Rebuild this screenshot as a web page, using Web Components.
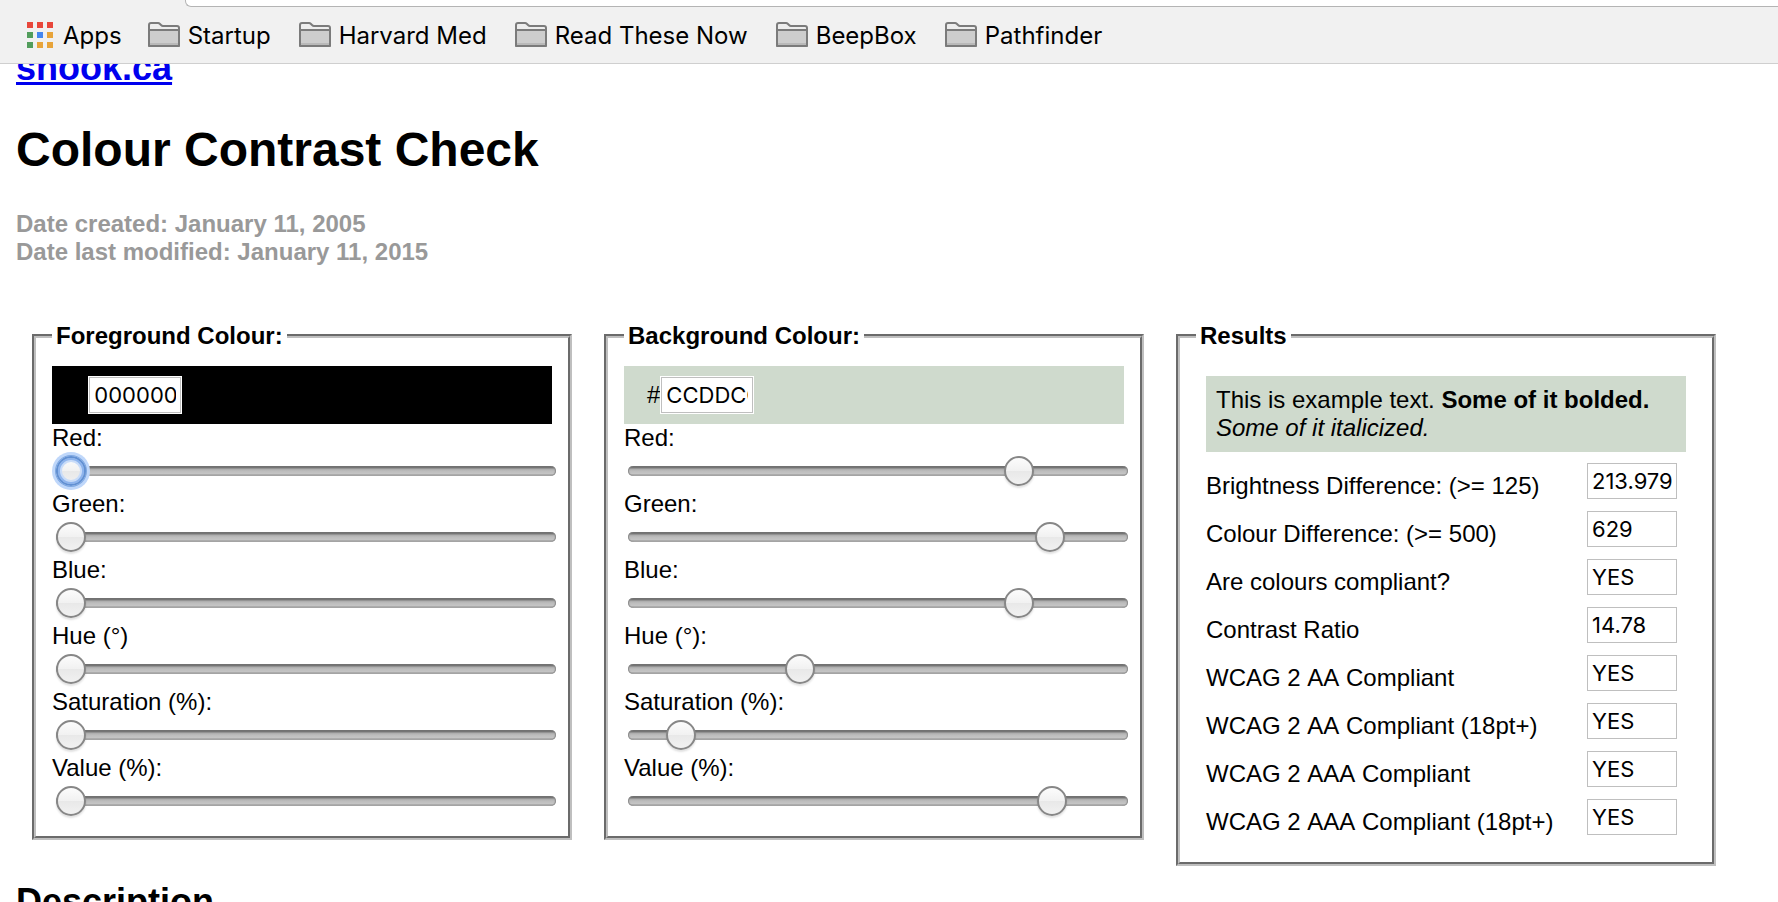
<!DOCTYPE html>
<html lang="en">
<head>
<meta charset="utf-8">
<title>Colour Contrast Check - snook.ca</title>
<style>
  html, body { margin: 0; height: 100%; }
  body {
    display: flex; flex-direction: column; overflow: hidden; background: #fff; color: #000;
    font: 24px/28px "Liberation Sans", Arial, sans-serif;
  }
</style>
</head>
<body>
<bookmarks-bar>
  <bookmark-folder>Startup</bookmark-folder>
  <bookmark-folder>Harvard Med</bookmark-folder>
  <bookmark-folder>Read These Now</bookmark-folder>
  <bookmark-folder>BeepBox</bookmark-folder>
  <bookmark-folder>Pathfinder</bookmark-folder>
</bookmarks-bar>
<contrast-page>
  <colour-panel legend="Foreground Colour:" value="000000" colour="#000000">
    <colour-slider value="0" max="255" active>Red:</colour-slider>
    <colour-slider value="0" max="255">Green:</colour-slider>
    <colour-slider value="0" max="255">Blue:</colour-slider>
    <colour-slider value="0" max="360">Hue (°)</colour-slider>
    <colour-slider value="0" max="100">Saturation (%):</colour-slider>
    <colour-slider value="0" max="100">Value (%):</colour-slider>
  </colour-panel>
  <colour-panel legend="Background Colour:" value="CCDDCC" colour="#cfdacd">
    <colour-slider value="204" max="255">Red:</colour-slider>
    <colour-slider value="221" max="255">Green:</colour-slider>
    <colour-slider value="204" max="255">Blue:</colour-slider>
    <colour-slider value="120" max="360">Hue (°):</colour-slider>
    <colour-slider value="8" max="100">Saturation (%):</colour-slider>
    <colour-slider value="87" max="100">Value (%):</colour-slider>
  </colour-panel>
  <results-panel>
    <result-row value="213.979">Brightness Difference: (&gt;= 125)</result-row>
    <result-row value="629">Colour Difference: (&gt;= 500)</result-row>
    <result-row value="YES">Are colours compliant?</result-row>
    <result-row value="14.78">Contrast Ratio</result-row>
    <result-row value="YES">WCAG 2 AA Compliant</result-row>
    <result-row value="YES">WCAG 2 AA Compliant (18pt+)</result-row>
    <result-row value="YES">WCAG 2 AAA Compliant</result-row>
    <result-row value="YES">WCAG 2 AAA Compliant (18pt+)</result-row>
  </results-panel>
</contrast-page>

<script>
const define = (name, render) => customElements.define(name, class extends HTMLElement {
  connectedCallback() {
    if (this.shadowRoot) return;
    this.attachShadow({ mode: 'open' }).innerHTML = render(this);
  }
});

const fieldsetStyle = `
  fieldset { margin: 0; min-width: 0; padding: 16px; border: 4px groove #bfbfbf; }
  legend { padding: 0 4px; font-weight: bold; }
`;

define('bookmarks-bar', () => `
  <style>
    :host { display: block; flex: none; background: #f1f1f1; border-bottom: 1px solid #cfcfcf; }
    .address { height: 6px; margin-left: 185px; background: #fff; border: solid #b4b4b4; border-width: 0 0 1px 1px; border-bottom-left-radius: 6px; }
    nav { display: flex; align-items: center; gap: 26px; height: 56px; padding: 0 27px; font: 24px/28px Inter, sans-serif; }
    a { display: flex; align-items: center; gap: 10px; color: inherit; text-decoration: none; }
    span { padding-top: 2px; }
    svg { display: block; }
  </style>
  <div class="address"></div>
  <nav aria-label="Bookmarks">
    <a href="#apps">
      <svg width="26" height="26" viewBox="0 0 26 26" aria-hidden="true">
        <path fill="#e8473b" d="M0 0h6v6H0zM10 0h6v6h-6zM20 0h6v6h-6z"/>
        <path fill="#529d5c" d="M0 10h6v6H0zM0 20h6v6H0z"/>
        <path fill="#4486f0" d="M10 10h6v6h-6z"/>
        <path fill="#e8a43a" d="M20 10h6v6h-6zM10 20h6v6h-6zM20 20h6v6h-6z"/>
      </svg>
      <span>Apps</span>
    </a>
    <slot></slot>
  </nav>`);

define('bookmark-folder', () => `
  <style>
    :host { display: block; padding-right: 2px; }
    button { display: flex; align-items: center; gap: 8px; padding: 0; border: 0; background: none; color: inherit; font: inherit; white-space: nowrap; }
    span { padding-top: 2px; }
    svg { display: block; }
  </style>
  <button type="button">
    <svg width="32" height="26" viewBox="0 0 32 26" aria-hidden="true">
      <path fill="#ededed" stroke="#7b7b7b" stroke-width="2" stroke-linejoin="round" d="M1 24V3q0-2 2-2h7q1 0 2 1l1 1q1 1 2 1h14q2 0 2 2v18z"/>
      <path fill="#cdcdcd" stroke="#7b7b7b" stroke-width="2" stroke-linejoin="round" d="M1 8h30v15q0 1-1 1H2q-1 0-1-1z"/>
      <path fill="#b9b9b9" d="M2 21h28v2H2z"/>
    </svg>
    <span><slot></slot></span>
  </button>`);

define('contrast-page', () => `
  <style>
    :host { display: block; flex: 1; min-height: 0; overflow: hidden; }
    main { margin-top: -17px; padding: 0 16px; }
    .site { margin: 0 0 33px; font-weight: bold; font-size: 36px; line-height: 42px; }
    .site a { color: #0000ee; }
    h1 { margin: 0 0 32px; font-size: 48px; line-height: 56px; }
    .dates { margin: 0 0 56px; font-weight: bold; color: #999; }
    .panels { display: grid; grid-template-columns: repeat(3, minmax(0, 540px)); gap: 32px; align-items: start; margin: 0 16px 15px; }
    h2 { margin: 0; font-size: 36px; line-height: 42px; }
  </style>
  <main>
    <p class="site"><a href="#home">snook.ca</a></p>
    <h1>Colour Contrast Check</h1>
    <p class="dates">Date created: January 11, 2005<br>Date last modified: January 11, 2015</p>
    <div class="panels"><slot></slot></div>
    <h2>Description</h2>
  </main>`);

define('colour-panel', el => `
  <style>
    :host { display: block; }
    ${fieldsetStyle}
    .swatch { display: flex; align-items: center; height: 38px; padding: 10px 23px; background: ${el.getAttribute('colour')}; }
    input { box-sizing: border-box; width: 94px; height: 38px; margin: 0; padding: 0 4px; border: 2px solid #fff; outline: 1px solid #bfbfbf; outline-offset: -2px; border-radius: 0; background: #fff; color: #000; font: 22px/28px Inter, sans-serif; }
  </style>
  <fieldset>
    <legend>${el.getAttribute('legend')}</legend>
    <div class="swatch"><label for="hex">#</label><input id="hex" type="text" value="${el.getAttribute('value')}"></div>
    <slot></slot>
  </fieldset>`);

define('colour-slider', el => `
  <style>
    :host { display: block; }
    label { display: block; white-space: nowrap; }
    input { appearance: none; -webkit-appearance: none; display: block; width: 100%; height: 30px; margin: 4px; background: none; outline: none; }
    input::-webkit-slider-runnable-track {
      height: 10px; border-radius: 5px;
      background: linear-gradient(#6e6e6e 0 1px, #7c7c7c 2px, #aaa 3px, #bdbdbd 5px, #c5c5c5 8px, #acacac 8px);
      box-shadow: inset 1px 0 1px #888, inset -1px 0 1px #888;
    }
    input::-webkit-slider-thumb {
      -webkit-appearance: none; box-sizing: border-box; width: 30px; height: 30px; margin-top: -10px;
      border: 2px solid #878787; border-radius: 50%;
      background: linear-gradient(#fcfcfc, #f1f1f1 50%, #e8e8e8 50%, #f1f1f1);
      box-shadow: 0 2px 2px rgba(0, 0, 0, .12);
    }
    input.active::-webkit-slider-thumb {
      border-color: #6190d3;
      box-shadow: 0 0 0 1px #7ea8e2, 0 0 0 4px #bfd7fa, inset 0 0 0 2px #8db4ee, inset 0 0 0 4px #c9dcf8;
    }
  </style>
  <label for="range"><slot></slot></label>
  <input id="range" type="range" min="0" max="${el.getAttribute('max')}" value="${el.getAttribute('value')}"${el.hasAttribute('active') ? ' class="active"' : ''}>`);

define('results-panel', () => `
  <style>
    :host { display: block; }
    ${fieldsetStyle}
    .example { margin: 10px; padding: 10px; background: #cfdacd; }
    .rows { padding: 0 10px; }
  </style>
  <fieldset>
    <legend>Results</legend>
    <div class="example">This is example text. <b>Some of it bolded.</b><br><i>Some of it italicized.</i></div>
    <div class="rows"><slot></slot></div>
  </fieldset>`);

define('result-row', el => `
  <style>
    :host { display: flex; justify-content: space-between; align-items: flex-start; height: 48px; font-kerning: none; }
    label { padding-top: 10px; white-space: nowrap; }
    input { box-sizing: border-box; width: 90px; height: 36px; margin: 1px 9px 0 0; padding: 0 4px; border: 1px solid #bfbfbf; border-radius: 0; background: #fff; color: #000; font: 22px/28px Inter, sans-serif; }
  </style>
  <label for="out"><slot></slot></label>
  <input id="out" type="text" readonly value="${el.getAttribute('value')}">`);
</script>
</body>
</html>
